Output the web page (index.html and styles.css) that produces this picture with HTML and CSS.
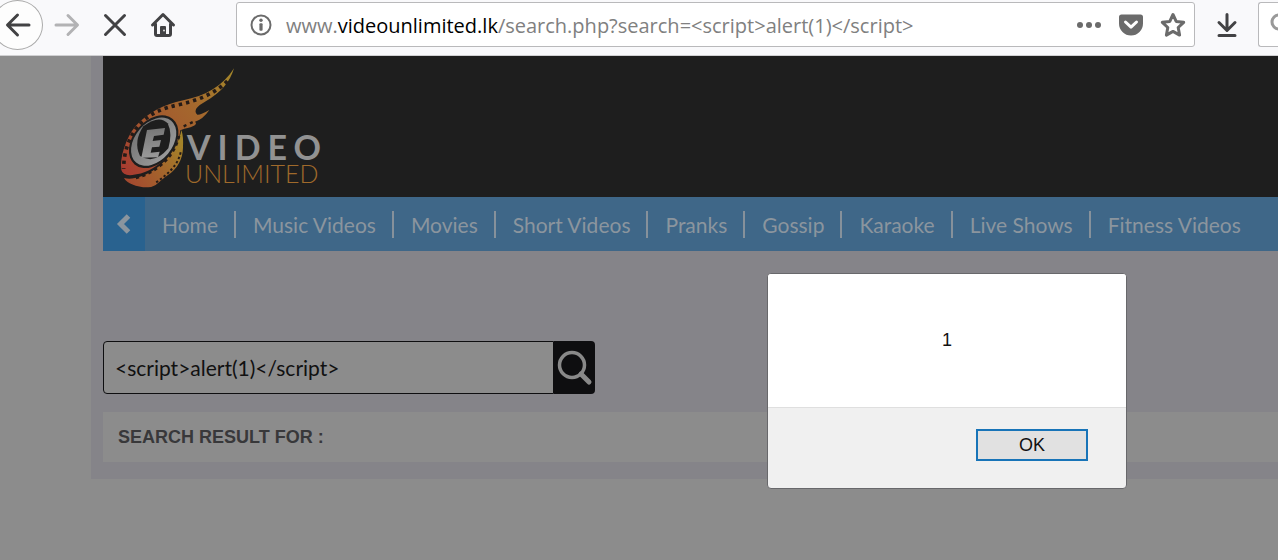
FILE: index.html
```
<!DOCTYPE html>
<html lang="en">
<head>
<meta charset="utf-8">
<title>Video Unlimited</title>
<link rel="stylesheet" href="styles.css">
</head>
<body>
<header class="toolbar">
  <div class="nav-buttons">
    <button class="tool back" aria-label="Back"><svg width="26" height="26" viewBox="0 0 26 26"><path d="M24 13H3M12.500 3L2.500 13l10 10" /></svg></button>
    <button class="tool forward" aria-label="Forward" disabled><svg width="26" height="26" viewBox="0 0 26 26"><path d="M2 13h21M14 3.500L23.500 13 14 22.500"/></svg></button>
    <button class="tool stop" aria-label="Stop"><svg width="26" height="26" viewBox="0 0 26 26"><path d="M3.500 3.500l19 19M22.500 3.500l-19 19"/></svg></button>
    <button class="tool home" aria-label="Home"><svg width="26" height="26" viewBox="0 0 26 26"><path d="M2.500 13L13 2.500 23.500 13M5.500 12v10q0 1.500 1.500 1.500h12q1.500 0 1.500-1.500V12"/><path class="solid" d="M10 23v-8q0-1 1-1h4q1 0 1 1v8z"/><circle cx="14" cy="18.500" r="1" fill="#ddd" stroke="none"/></svg></button>
  </div>
  <div class="address">
    <svg width="22" height="22" viewBox="0 0 22 22" class="info"><circle cx="11" cy="11" r="9.500" fill="none" stroke="#6b6b6b" stroke-width="2"/><circle cx="11" cy="6.200" r="1.700"/><rect x="9.400" y="9.300" width="3.200" height="7.500" rx="1"/></svg>
    <div class="url" role="textbox" aria-label="Address" contenteditable="true" spellcheck="false">www.<span class="domain">videounlimited.lk</span>/search.php?search=&lt;script&gt;alert(1)&lt;/script&gt;</div>
    <button class="tool small" aria-label="Page actions"><svg width="26" height="26" viewBox="0 0 26 26"><g class="grey"><circle cx="4" cy="13" r="3"/><circle cx="13" cy="13" r="3"/><circle cx="22" cy="13" r="3"/></g></svg></button>
    <button class="tool small" aria-label="Save to Pocket"><svg width="26" height="26" viewBox="0 0 26 26"><path class="grey" d="M3.500 2.500h19Q25 2.500 25 5v6.500a12 12 0 0 1-24 0V5Q1 2.500 3.500 2.500z"/><path d="M7.500 10l5.500 5.200 5.500-5.200" stroke="#fff"/></svg></button>
    <button class="tool small" aria-label="Bookmark"><svg width="26" height="26" viewBox="0 0 26 26"><path class="star" d="M13 2.500l3.200 6.900 7.500.9-5.500 5.200 1.400 7.600-6.600-3.700-6.600 3.700 1.400-7.600-5.500-5.200 7.500-.9z"/></svg></button>
  </div>
  <button class="tool download" aria-label="Downloads"><svg width="26" height="26" viewBox="0 0 26 26"><path d="M13 2.500v15M5 10.500l8 8 8-8M5 23.500h16"/></svg></button>
  <div class="searchbar"><svg width="24" height="24" viewBox="0 0 24 24"><circle cx="9" cy="9" r="7" fill="none" stroke="#999" stroke-width="3"/><path d="M14 14l7 7" stroke="#999" stroke-width="3"/></svg></div>
</header>

<main class="page">
  <div class="container">
    <div class="banner">
      <a href="#" class="logo" aria-label="E Video Unlimited">
        <svg width="210" height="124" viewBox="0 0 210 124">
          <defs>
            <linearGradient id="flame" x1="20" y1="310" x2="350" y2="20" gradientUnits="userSpaceOnUse"><stop offset="0" stop-color="#a83c30"/><stop offset=".3" stop-color="#a4562f"/><stop offset=".65" stop-color="#a4682d"/><stop offset="1" stop-color="#a4862a"/></linearGradient>
            <linearGradient id="reel" x1="30" y1="350" x2="205" y2="240" gradientUnits="userSpaceOnUse"><stop offset="0" stop-color="#a4482f"/><stop offset=".5" stop-color="#a4632c"/><stop offset="1" stop-color="#a48429"/></linearGradient>
            <linearGradient id="steel" x1="0" y1="0" x2="0" y2="1"><stop offset="0" stop-color="#777"/><stop offset="1" stop-color="#999"/></linearGradient>
          </defs>
          <g transform="scale(.33333) translate(-9 -6)">
            <path fill="url(#flame)" d="M357 13C325 66 270 96 205 109C145 122 98 147 62 186C32 222 14 281 19 318Q24 336 52 333C120 328 190 262 196 199L208 194C237 188 249 181 240 173Q264 166 283 138Q257 153 247 152C234 140 246 126 270 113C318 86 345 54 357 13z"/>
            <path fill="url(#reel)" d="M199 198C189 260 128 330 60 342Q42 346 27 342C36 358 66 371 100 370C124 369 132 352 158 334C188 313 203 286 204 251Q206 218 199 198z"/>
            <path fill="none" stroke="#251b17" stroke-width="11" stroke-dasharray="10 12" d="M337 51C299 90 249 108 197 121C140 132 103 150 74 181C43 216 26 263 26 314"/>
            <path fill="none" stroke="#251b17" stroke-width="8" stroke-dasharray="10 10" d="M192 216C181 270 133 326 55 344"/>
            <path fill="none" stroke="#251b17" stroke-width="6" stroke-dasharray="7 7" d="M197 265C188 307 155 333 118 359"/>
            <path fill="none" stroke="#251b17" stroke-width="7" stroke-dasharray="9 12" d="M206 187l34-16"/>
            <ellipse cx="116" cy="233" rx="89" ry="62" transform="rotate(-50 116 233)" fill="#1e1e1e"/>
            <ellipse cx="116" cy="233" rx="82" ry="56" transform="rotate(-50 116 233)" fill="url(#steel)"/>
            <path fill="#1e1e1e" d="M85 187Q132 151 158 178Q173 208 160 253Q119 303 75 276Q54 234 85 187z"/>
            <path fill="url(#steel)" d="M96 198l54-6-4 20-29 4-4 15 25-3-5 20-22 2-4 16 27-3-5 17-50 1z"/>
          </g>
          <text class="logo-main" x="69" y="94">VIDEO</text>
          <text class="logo-sub" x="67" y="117">UNLIMITED</text>
        </svg>
      </a>
    </div>
    <nav class="menu">
      <button class="prev" aria-label="Previous"><svg width="16" height="20" viewBox="0 0 16 20"><path d="M12.500 2L4.500 10l8 8" fill="none" stroke="#8b959e" stroke-width="5"/></svg></button>
      <a href="#">Home</a><a href="#">Music Videos</a><a href="#">Movies</a><a href="#">Short Videos</a><a href="#">Pranks</a><a href="#">Gossip</a><a href="#">Karaoke</a><a href="#">Live Shows</a><a href="#">Fitness Videos</a>
    </nav>
    <form class="search">
      <input type="text" aria-label="Search videos" value="&lt;script&gt;alert(1)&lt;/script&gt;">
      <button type="button" aria-label="Search"><svg width="36" height="36" viewBox="0 0 36 36"><circle cx="15" cy="15" r="12.500" fill="none" stroke="#898989" stroke-width="3.500"/><path d="M24 24l8 8" stroke="#898989" stroke-width="5" stroke-linecap="round"/></svg></button>
    </form>
    <h1 class="result">SEARCH RESULT FOR :</h1>
  </div>
</main>

<div class="dialog" role="alertdialog" aria-labelledby="message">
  <p class="message" id="message">1</p>
  <div class="actions"><button class="ok">OK</button></div>
</div>
</body>
</html>
```
FILE: styles.css
```
* { box-sizing: border-box; }
body {
  margin: 0;
  min-height: 100vh;
  background: #8c8c8c;
  font-family: Lato, sans-serif;
  overflow-x: hidden;
}
button { border: 0; padding: 0; background: none; }
svg { display: block; }

.toolbar {
  display: flex;
  align-items: center;
  height: 56px;
  padding-bottom: 6px;
  background: #f9f9fb;
  border-bottom: 1px solid #d0d0d2;
}
.nav-buttons { display: flex; align-items: center; width: 236px; flex: none; }
.tool {
  display: grid;
  place-items: center;
  flex: none;
  width: 48px;
  height: 50px;
}
.tool path { fill: none; stroke: #424244; stroke-width: 3; stroke-linecap: round; stroke-linejoin: round; }
.tool path.solid { fill: #424244; stroke: none; }
.back {
  width: 51px;
  margin-left: -8px;
  padding-left: 1px;
  background: #fdfdfd;
  border: 1px solid #aaa;
  border-radius: 50%;
}
.forward path { stroke: #b2b2b4; }
.tool .grey { fill: #6b6b6b; stroke: none; }
.tool path.grey { fill: #6b6b6b; stroke: none; }
.tool path[stroke="#fff"] { stroke: #fff; }
.tool path.star { stroke: #6b6b6b; }
.address {
  display: flex;
  align-items: center;
  flex: 1;
  height: 45px;
  padding: 0 0 0 13px;
  background: #fff;
  border: 1px solid #b9b9bb;
  border-radius: 3px;
}
.info { fill: #6b6b6b; flex: none; }
.url {
  flex: 1;
  padding-top: 2px;
  margin-left: 14px;
  font: 20px/28px "Open Sans", sans-serif;
  color: #808080;
  white-space: nowrap;
  outline: 0;
}
.domain { color: #000; }
.small { width: 42px; height: 42px; }
.download { width: 63px; }
.searchbar {
  flex: none;
  width: 20px;
  height: 45px;
  padding: 10px 0 0 11px;
  overflow: hidden;
  background: #fff;
  border: 1px solid #b9b9bb;
  border-right: 0;
  border-radius: 3px 0 0 3px;
}

.page { padding-left: 91px; }
.container { padding: 0 0 17px 12px; background: #858489; }
.banner { height: 141px; padding: 10px 15px 0; background: #1e1e1e; }
.logo { display: inline-block; }
.logo-main { font: 700 34px Lato, sans-serif; letter-spacing: 7px; fill: #929292; }
.logo-sub { font: 400 25px Lato, sans-serif; font-weight: 300; fill: #a06a2b; }

.menu {
  display: flex;
  align-items: center;
  height: 54px;
  background: #3f6788;
  white-space: nowrap;
}
.prev {
  display: grid;
  place-items: center;
  flex: none;
  width: 42px;
  height: 54px;
  background: #29628f;
}
.menu a {
  padding: 0 16px 0 17px;
  border-right: 2px solid #86919b;
  font-size: 21px;
  line-height: 27px;
  color: #8b959e;
  text-decoration: none;
}
.menu a:last-child { border-right: 0; }

.search {
  display: flex;
  width: 492px;
  height: 53px;
  margin: 90px 0 18px;
}
.search input {
  flex: 1;
  min-width: 0;
  padding: 0 11px;
  font: 21px Lato, sans-serif;
  color: #111;
  background: #8c8c8c;
  border: 1px solid #0e0e10;
  border-radius: 4px 0 0 4px;
  outline: 0;
}
.search button {
  display: grid;
  place-items: center;
  width: 41px;
  background: #0e0e10;
  border-radius: 0 4px 4px 0;
}
.result {
  margin: 0;
  padding: 0 15px;
  font: 700 18px/50px "Liberation Sans", sans-serif;
  color: #38383a;
  background: #8c8c8c;
}

.dialog {
  position: absolute;
  left: 767px;
  top: 273px;
  width: 360px;
  background: #f0f0f0;
  border: 1px solid #68686b;
  border-radius: 4px;
  overflow: hidden;
  font-family: "Liberation Sans", sans-serif;
  color: #111;
}
.message {
  margin: 0;
  font-size: 18px;
  line-height: 133px;
  text-align: center;
  background: #fff;
  border-bottom: 1px solid #dfdfdf;
}
.actions { display: flex; justify-content: flex-end; padding: 21px 38px 27px; }
.ok {
  width: 112px;
  height: 32px;
  font: 18px "Liberation Sans", sans-serif;
  color: #111;
  background: #e1e1e1;
  border: 2px solid #1874b8;
}
```
